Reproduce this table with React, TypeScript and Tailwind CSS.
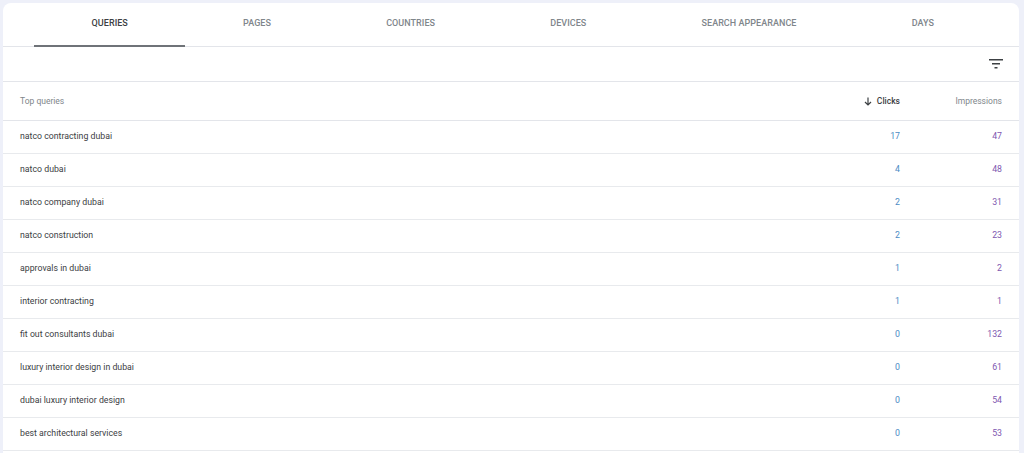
import React from "react";

const tabs = ["QUERIES", "PAGES", "COUNTRIES", "DEVICES", "SEARCH APPEARANCE", "DAYS"];
const rows: [string, number, number][] = [
  ["natco contracting dubai", 17, 47],
  ["natco dubai", 4, 48],
  ["natco company dubai", 2, 31],
  ["natco construction", 2, 23],
  ["approvals in dubai", 1, 2],
  ["interior contracting", 1, 1],
  ["fit out consultants dubai", 0, 132],
  ["luxury interior design in dubai", 0, 61],
  ["dubai luxury interior design", 0, 54],
  ["best architectural services", 0, 53],
];

export default function App() {
  return (
    <div
      className="w-[1024px] h-[453px] bg-[#eef0f9] pt-[3px] pl-[3px] overflow-hidden"
      style={{ fontFamily: "Roboto, 'Liberation Sans', sans-serif" }}
    >
      <div className="w-[1016px] h-[450px] bg-white rounded-t-[8px] overflow-hidden">
        <div className="flex h-[44px] border-b border-[#e3e5ea] pl-[31px]">
          {tabs.map((t, i) => (
            <div
              key={t}
              className={
                "px-[57.6px] flex items-center text-[9px] font-medium tracking-[0.05px] border-b-2 -mb-px " +
                (i === 0 ? "text-[#3c4043] border-[#6f7378]" : "text-[#80868b] border-transparent")
              }
            >
              {t}
            </div>
          ))}
        </div>
        <div className="h-[35px] border-b border-[#e3e5ea] flex items-center justify-end pr-[16px]">
          <svg width="14" height="10" viewBox="0 0 14 10">
            <rect x="0" y="0" width="14" height="1.5" fill="#3c4043" />
            <rect x="3" y="4" width="8" height="1.5" fill="#3c4043" />
            <rect x="5.5" y="8" width="3" height="1.5" fill="#3c4043" />
          </svg>
        </div>
        <div className="h-[39px] border-b border-[#e3e5ea] flex items-center pl-[17px] pr-[17px] text-[8.5px]">
          <div className="flex-1 text-[#80868b]">Top queries</div>
          <div className="w-[100px] flex justify-end items-center gap-[5px] text-[#3c4043] font-medium">
            <svg width="8" height="9" viewBox="0 0 8 9">
              <path d="M4 0.5V8M1 5l3 3 3-3" stroke="#3c4043" strokeWidth="1.2" fill="none" />
            </svg>
            Clicks
          </div>
          <div className="w-[102px] text-right text-[#80868b]">Impressions</div>
        </div>
        {rows.map(([q, c, im]) => (
          <div
            key={q}
            className="h-[33px] border-b border-[#e8eaed] flex items-center pl-[17px] pr-[17px] text-[8.75px]"
          >
            <div className="flex-1 text-[#3c4043]">{q}</div>
            <div className="w-[100px] text-right text-[#4b8bc4]">{c}</div>
            <div className="w-[102px] text-right text-[#7e57b0]">{im}</div>
          </div>
        ))}
      </div>
    </div>
  );
}
